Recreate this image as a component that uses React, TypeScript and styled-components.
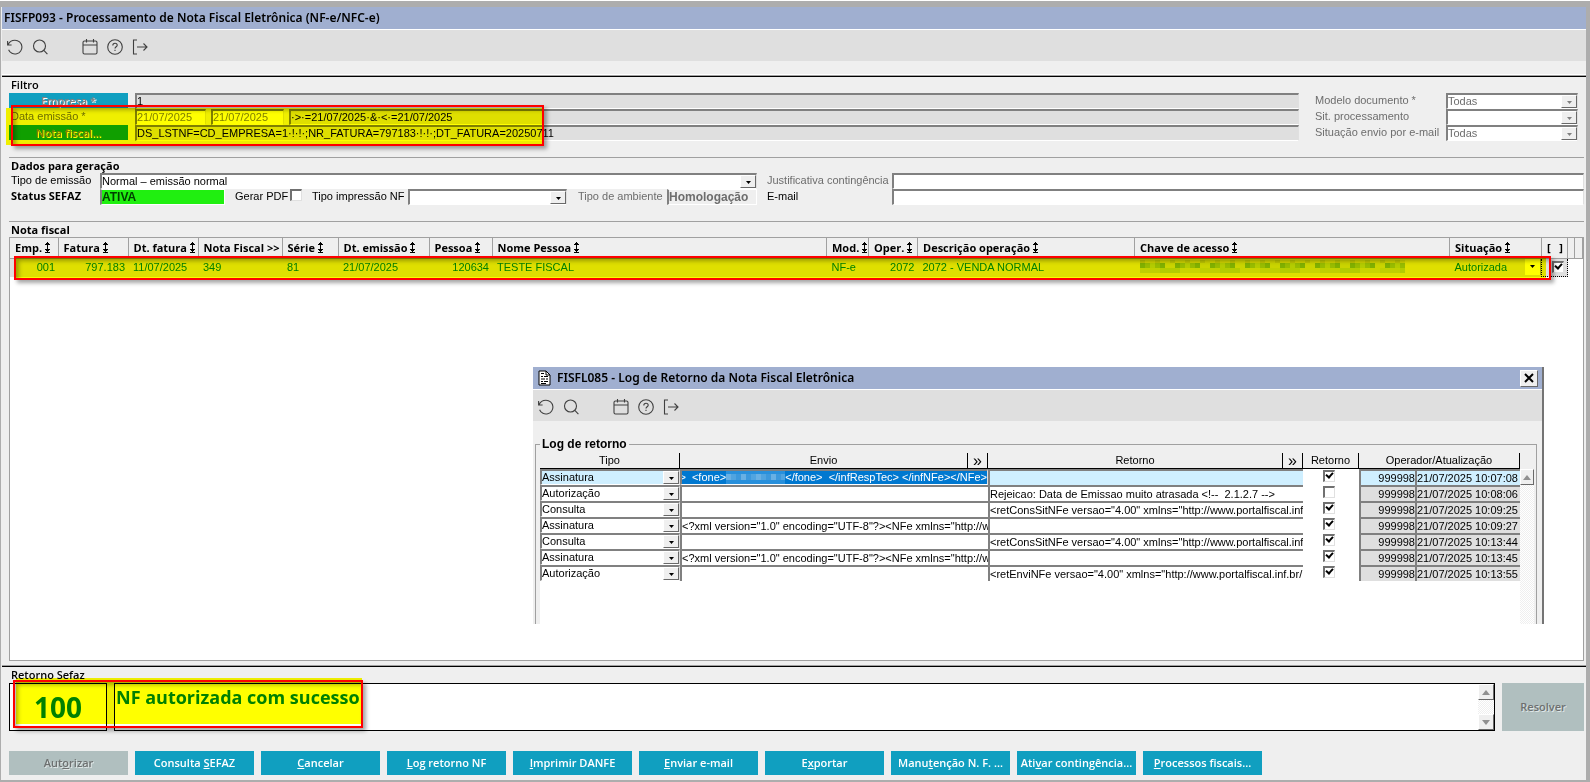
import React from "react";
import styled, { createGlobalStyle, css } from "styled-components";

const UI = `"Liberation Sans", Arial, sans-serif`;
const HEAD = `"Open Sans", "Noto Sans", sans-serif`;
const TITLE = `"Noto Sans", "DejaVu Sans", sans-serif`;

const Global = createGlobalStyle`
  *, *::before, *::after { box-sizing: border-box; }
  body { margin: 0; background: #fff; font: 11px/16px ${UI}; color: #000; }
  button, input, select, textarea { font: inherit; color: inherit; border-radius: 0; margin: 0; padding: 0; outline: 0; }
  svg { display: block; }
`;

const Frame = styled.div`
  display: flex;
  flex-direction: column;
  min-height: calc(100vh - 1px);
  margin-top: 1px;
  border: solid #adadad;
  border-width: 6px 4px 2px 1px;
  padding-left: 1px;
  background: #efefef;
`;

const TitleBar = styled.header`
  display: flex;
  align-items: center;
  gap: 6px;
  height: 23px;
  padding: 0 4px 0 2px;
  background: #a0afd0;
  border-bottom: 1px solid #fff;
  font: 600 12px/22px ${TITLE};
`;

const LogTitleBar = styled(TitleBar)`
  padding-left: 5px;
`;

const Title = styled.h1`
  flex: 1;
  margin: 0;
  font: inherit;
`;

const Toolbar = styled.nav`
  display: flex;
  align-items: center;
  gap: 9px;
  height: 31px;
  padding: 2px 5px 0;
  background: #dfdfdf;
`;

const ToolButton = styled.button<{ $apart?: boolean }>`
  border: 0;
  background: none;
  width: 16px;
  height: 16px;
  margin-left: ${(p) => (p.$apart ? 25 : 0)}px;
  color: #404040;
`;

const Rule = styled.hr`
  width: 100%;
  height: 2px;
  margin: 0;
  border: 0;
  border-top: 1px solid #a0a0a0;
  background: #000;
  flex: none;
`;

const Section = styled.section<{ $lined?: boolean; $grow?: boolean }>`
  position: relative;
  display: flex;
  flex-direction: column;
  margin: 0 2px 0 7px;
  padding-bottom: ${(p) => (p.$grow ? 4 : 16)}px;
  ${(p) => p.$lined && "border-top: 1px solid #a0a0a0;"}
  ${(p) => p.$grow && "flex: 1;"}
`;

const Heading = styled.h2<{ $small?: boolean }>`
  margin: 0;
  padding-left: 2px;
  font: ${(p) => (p.$small ? 600 : 700)} 11px/15px ${HEAD};
`;

/* Form parts */
const sunken = css`
  border: 1px solid #fff;
  border-top: 2px solid #808080;
  border-left: 2px solid #808080;
  border-right-color: #e0e0e0;
`;

const Field = styled.input<{ $grey?: boolean; $dim?: boolean }>`
  ${sunken}
  width: 100%;
  min-width: 0;
  height: 16px;
  line-height: 12px;
  padding: 0 0 1px;
  background: ${(p) => (p.$grey ? "#dfdfdf" : "#fff")};
  color: ${(p) => (p.$dim ? "#808080" : "#000")};
`;

const Label = styled.label<{ $dim?: boolean; $strong?: boolean }>`
  white-space: nowrap;
  line-height: 14px;
  color: ${(p) => (p.$dim ? "#6d6d6d" : "#000")};
  ${(p) => p.$strong && `font: 700 11px/14px ${HEAD};`}
`;

const ComboBox = styled.span`
  ${sunken}
  display: flex;
  height: 16px;
  width: 100%;
  background: #fff;
`;

const ComboSelect = styled.select<{ $dim?: boolean }>`
  appearance: none;
  flex: 1;
  min-width: 0;
  height: 12px;
  border: 0;
  background: transparent;
  line-height: 12px;
  padding: 0;
  opacity: 1;
  color: ${(p) => (p.$dim ? "#6d6d6d" : "inherit")};
`;

const raised = css`
  border: 1px solid #fff;
  border-right-color: #696969;
  border-bottom-color: #696969;
  background: #efefef;
`;

const ComboArrow = styled.span`
  ${raised}
  flex: none;
  width: 16px;
  padding-top: 2px;
  display: grid;
  place-items: center;
  pointer-events: none;
`;

const Tick = styled.input`
  appearance: none;
  flex: none;
  display: block;
  width: 12px;
  height: 12px;
  border: 1px solid #e0e0e0;
  border-top: 2px solid #707070;
  border-left: 2px solid #707070;
  background: #fff;
  position: relative;
  &:checked::after {
    content: "";
    position: absolute;
    left: 1px;
    top: 0;
    width: 7px;
    height: 5px;
    border: solid #000;
    border-width: 0 0 2px 2px;
    transform: rotate(-48deg);
  }
`;

const ActionButton = styled.button`
  width: 119px;
  height: 24px;
  border: 0;
  background: #109fc0;
  color: #fff;
  font: 600 11px/24px ${HEAD};
  white-space: nowrap;
  &:disabled {
    background: #b0bfbf;
    color: #6d7070;
    text-shadow: 1px 1px 0 #dfe6e6;
  }
`;

const FilterButton = styled.button`
  height: 16px;
  border: 0;
  border-bottom: 1px solid #efefef;
  background: #109fc0;
  color: #808080;
  text-shadow: 1px 1px 0 #fff;
  font: 600 11px/15px ${HEAD};
`;

/* Highlighter marks laid over a region */
const Marker = styled.div`
  position: absolute;
  background: #ff0;
  mix-blend-mode: multiply;
  pointer-events: none;
`;

const MarkFrame = styled.div`
  position: absolute;
  border: 2px solid #f00;
  box-shadow: 3px 3px 4px rgba(0, 0, 0, 0.35), inset 3px 3px 4px rgba(0, 0, 0, 0.3);
  pointer-events: none;
`;

const FilterMarker = styled(Marker)`left: -3px; top: 31px; width: 537px; height: 37px;`;
const FilterFrame = styled(MarkFrame)`left: 2px; top: 28px; width: 533px; height: 41px;`;
const RowMarker = styled(Marker)`left: 6px; right: 37px; top: 20px; height: 20px;`;
const RowFrame = styled(MarkFrame)`left: 4px; right: 32px; top: 18px; height: 24px;`;
const ReturnMarker = styled(Marker)`left: 7px; top: -5px; width: 346px; height: 46px;`;
const ReturnFrame = styled(MarkFrame)`left: 4px; top: -3px; width: 350px; height: 48px;`;

/* Filter */
const FilterGrid = styled.div`
  display: grid;
  grid-template-columns: 119px minmax(0, 1fr) 131px 132px;
  padding-right: 6px;
  margin-top: 1px;
  & > label:nth-child(4n + 1) { padding-left: 2px; }
  & > :nth-child(4n + 2) { margin-left: 7px; margin-right: 16px; width: auto; }
`;

const DateRow = styled.div`
  display: grid;
  grid-template-columns: 71px 73px minmax(0, 1fr);
  column-gap: 5px;
`;

/* Generation data */
const DataGrid = styled.div`
  display: grid;
  grid-template-columns: 91px 657px 119px minmax(0, 1fr);
  & > :nth-child(4n + 1) { padding-left: 2px; }
  & > :nth-child(4n + 3) { margin-left: 10px; }
  & > :nth-child(4n + 4) { margin-left: 16px; width: auto; }
`;

const StatusValue = styled.input<{ $live?: boolean }>`
  height: 16px;
  width: 100%;
  border: 1px solid #fff;
  border-left: 2px solid #808080;
  background: ${(p) => (p.$live ? "#20ef10" : "#efefef")};
  color: ${(p) => (p.$live ? "#004000" : "#6d6d6d")};
  font: 700 12px/14px ${UI};
`;

const PdfOption = styled.span`
  display: flex;
  gap: 2px;
  padding-left: 10px;
`;

const GenerationRow = styled.div`
  display: grid;
  grid-template-columns: 125px 76px 107px 159px 100px 90px;
  & > label { padding-left: 11px; }
`;

/* Invoice list */
const ListBox = styled.div`
  position: relative;
  flex: 1;
  min-height: 424px;
  border: 1px solid #a0a0a0;
  background: #fff;
`;

const ListTable = styled.table`
  width: 100%;
  table-layout: fixed;
  border-collapse: collapse;
`;

const ListHead = styled.th`
  height: 20px;
  padding: 0 0 0 5px;
  background: #efefef;
  border-right: 1px solid #a0a0a0;
  border-bottom: 1px solid #a0a0a0;
  font: 700 11px/18px ${HEAD};
  text-align: left;
  white-space: pre;
  overflow: hidden;
`;

const HeadText = styled.span`
  display: flex;
  align-items: center;
  gap: 2px;
`;

const ListCell = styled.td<{ $right?: boolean }>`
  height: 18px;
  padding: 0 3px 2px 5px;
  background: #dfdfdf;
  color: #008000;
  text-align: ${(p) => (p.$right ? "right" : "left")};
  white-space: nowrap;
`;

const StateCell = styled.div`
  display: flex;
  align-items: center;
  justify-content: space-between;
  margin-right: -3px;
`;

const StateButton = styled.button`
  border: 0;
  border-right: 1px solid #a0a0a0;
  width: 16px;
  height: 16px;
  background: #fff;
  display: grid;
  place-items: center;
`;

const CheckCell = styled.td`
  padding: 0 0 0 10px;
  background: #dfdfdf;
  border: 1px dotted #000;
`;

/* Log window */
const LogWindow = styled.section`
  position: absolute;
  left: 523px;
  right: 39px;
  top: 129px;
  height: 257px;
  overflow: hidden;
  background: #efefef;
  border-right: 2px solid #747474;
  z-index: 2;
`;

const CloseButton = styled.button`
  ${raised}
  width: 18px;
  height: 17px;
  display: grid;
  place-items: center;
`;

const LogGroup = styled.fieldset`
  min-width: 0;
  margin: 15px 5px 0 2px;
  padding: 1px 2px 0 4px;
  height: 220px;
  border: 1px solid #a0a0a0;
  display: block;
`;

const LogLegend = styled.legend`
  padding: 0 2px;
  font: 700 12px/16px ${UI};
`;

const LogBody = styled.div`
  display: flex;
  background: linear-gradient(#efefef 16px, #fff 16px);
  height: 200px;
`;

const LogTableArea = styled.div`
  flex: 1;
  min-width: 0;
`;

const LogTable = styled.table`
  width: 100%;
  table-layout: fixed;
  border-collapse: separate;
  border-spacing: 0;
`;

const LogHead = styled.th`
  height: 16px;
  padding: 0;
  background: #efefef;
  border-right: 1px solid #000;
  border-bottom: 1px solid #000;
  font: 400 11px/15px ${UI};
  text-align: center;
`;

const HeadSplit = styled.span`
  display: flex;
  & > :first-child { flex: 1; }
`;

const MoreButton = styled.button`
  width: 20px;
  height: 15px;
  border: 0;
  border-left: 1px solid #000;
  background: none;
  font: 16px/13px ${UI};
`;

const LogCell = styled.td<{ $active?: boolean; $grey?: boolean }>`
  height: 16px;
  padding: 0;
  overflow: hidden;
  & > * { background: ${(p) => (p.$active ? "#cfefff" : p.$grey ? "#dfdfdf" : "#fff")}; }
`;

const LogField = styled(Field)<{ $right?: boolean }>`
  display: block;
  text-align: ${(p) => (p.$right ? "right" : "left")};
  border-bottom-width: 0;
  border-right-width: 0;
`;

const Selected = styled.div`
  ${sunken}
  display: flex;
  justify-content: flex-end;
  height: 16px;
  line-height: 13px;
  white-space: pre;
  overflow: hidden;
  color: #fff;
  && { background: #0078d0; }
`;

const Masked = styled.svg`
  flex: none;
`;

const TickWrap = styled.div`
  display: grid;
  justify-items: center;
  height: 16px;
  padding: 1px 4px 0 0;
  && { background: #fff; }
`;

const checker = css`
  background: repeating-conic-gradient(#efefef 0 25%, #fff 0 50%) 0 0 / 2px 2px;
`;

const LogScroll = styled.div`
  ${checker}
  width: 14px;
  margin-top: 16px;
`;

const ScrollButton = styled.button`
  ${raised}
  width: 100%;
  height: 16px;
  display: grid;
  place-items: center;
`;

/* Return message */
const ReturnRow = styled.div`
  position: relative;
  display: grid;
  grid-template-columns: 98px minmax(0, 1fr) 82px;
  grid-template-rows: 48px;
  column-gap: 7px;
  margin: 1px 0 20px;
`;

const CodeBox = styled.input`
  width: 100%;
  height: 48px;
  border: 1px solid #000;
  background: #fff;
  color: #008000;
  font: 700 28px/44px ${HEAD};
  text-align: center;
`;

const MessageBox = styled.div`
  display: flex;
  min-height: 0;
  border: 1px solid #000;
  background: #fff;
`;

const Message = styled.textarea`
  flex: 1;
  height: 46px;
  border: 0;
  resize: none;
  overflow: hidden;
  padding: 0 1px;
  color: #008000;
  background: #fff;
  font: 700 18px/27px ${HEAD};
`;

const MessageScroll = styled.div`
  ${checker}
  width: 16px;
  display: flex;
  flex-direction: column;
  justify-content: space-between;
`;

const ResolveButton = styled(ActionButton)`
  width: 100%;
  height: 48px;
`;

const Actions = styled.div`
  display: flex;
  flex-wrap: wrap;
  gap: 7px;
`;

const Footer = styled(Section)`
  padding-bottom: 5px;
`;

const Spacer = styled.div`
  height: 14px;
  flex: none;
  border-bottom: 1px solid #fff;
`;

/* Drawings */
const Icon = ({ children }: { children: React.ReactNode }) => (
  <svg width="16" height="16" viewBox="0 0 16 16" fill="none" stroke="currentColor" strokeWidth="1.1">
    {children}
  </svg>
);

const Down = ({ dim }: { dim?: boolean }) => (
  <svg width="5" height="3" viewBox="0 0 5 3"><path d="M0 0h5L2.5 3z" fill={dim ? "#808080" : "#000"} /></svg>
);

const Triangle = ({ down }: { down?: boolean }) => (
  <svg width="8" height="5" viewBox="0 0 8 5"><path d={down ? "M0 0h8L4 5z" : "M0 5h8L4 0z"} fill="#909090" /></svg>
);

const Sort = () => (
  <svg width="7" height="11" viewBox="0 0 7 11" fill="#000" shapeRendering="crispEdges">
    <path d="M3 0h1v10H3zM2 1h3v1H2zM1 2h5v1H1zM1 7h5v1H1zM2 8h3v1H2zM1 10h5v1H1z" />
  </svg>
);

const PageIcon = () => (
  <svg width="13" height="16" viewBox="0 0 13 16">
    <path d="M1 1h7l4 4v10H1z" fill="#fff" stroke="#000" />
    <path d="M8 1v4h4M3 3.5h3M3 6.500h2M6 6.500h4M3 9h4M8 9h2M3 11.500h2M6 11.500h4M3 13.500h5" fill="none" stroke="#000" />
  </svg>
);

const tones = ["#80b080", "#c0d0c0", "#a0c0a0", "#b4ccb4", "#98bc98", "#cad4ca", "#a8c4a8"];
const Mosaic = () => (
  <svg width="265" height="14" viewBox="0 0 265 14">
    {Array.from({ length: 53 }, (_, i) => (
      <g key={i}>
        <rect x={i * 5} y="0" width="5" height="3" fill={i % 3 ? "#cdd2cd" : "#bcc4bc"} />
        <rect x={i * 5} y="3" width="5" height="5" fill={tones[(i * i + i * 3) % 7]} />
        <rect x={i * 5} y="8" width="5" height="5" fill={tones[((i * 5 + (i % 4)) % 6) + 1]} />
      </g>
    ))}
  </svg>
);

const PhoneMask = () => (
  <Masked width="59" height="14" viewBox="0 0 59 14">
    <rect width="59" height="14" fill="#2890dc" />
    {Array.from({ length: 12 }, (_, i) => (
      <rect key={i} x={i * 5} y="3" width="5" height="6" fill={i % 3 === 0 ? "#68b0e4" : i % 2 ? "#50a4e0" : "#3c98dc"} />
    ))}
  </Masked>
);

const Tools = () => (
  <Toolbar>
    <ToolButton aria-label="Atualizar">
      <Icon><path d="M.6 2v4h4M1 5.800C2.200 2.800 5 1.200 8 1.200a6.900 6.900 0 1 1-6.400 9.500" /></Icon>
    </ToolButton>
    <ToolButton aria-label="Pesquisar">
      <Icon><circle cx="7.500" cy="7" r="6" /><path d="M11.800 11.400l3.600 3.800" /></Icon>
    </ToolButton>
    <ToolButton $apart aria-label="Calendário">
      <Icon><rect x="1" y="2" width="14" height="13" rx="1.500" /><path d="M1 6h14M4.500 0v3.500M11.500 0v3.500" /></Icon>
    </ToolButton>
    <ToolButton aria-label="Ajuda">
      <Icon>
        <circle cx="8" cy="8" r="7.300" />
        <path d="M5.800 6.400c0-1.300 1-2.200 2.200-2.200s2.200.9 2.200 2c0 1.500-2.200 1.700-2.200 3.400M8 10.700v1.300" />
      </Icon>
    </ToolButton>
    <ToolButton aria-label="Sair">
      <Icon><path d="M5 1H1.500v14H5M5 8h10M11.500 4.500L15 8l-3.500 3.500" /></Icon>
    </ToolButton>
  </Toolbar>
);

const Combo = ({ id, value, dim, label }: { id?: string; value: string; dim?: boolean; label?: string }) => (
  <ComboBox>
    <ComboSelect id={id} aria-label={label} $dim={dim} disabled={dim} defaultValue={value}>
      <option>{value}</option>
    </ComboSelect>
    <ComboArrow><Down dim={dim} /></ComboArrow>
  </ComboBox>
);

const columns: { text: string; width?: number; sort?: boolean }[] = [
  { text: "Emp.", width: 48, sort: true },
  { text: "Fatura", width: 70, sort: true },
  { text: "Dt. fatura", width: 70, sort: true },
  { text: "Nota Fiscal >>", width: 84 },
  { text: "Série", width: 56, sort: true },
  { text: "Dt. emissão", width: 91, sort: true },
  { text: "Pessoa", width: 63, sort: true },
  { text: "Nome Pessoa", sort: true },
  { text: "Mod.", width: 42, sort: true },
  { text: "Oper.", width: 49, sort: true },
  { text: "Descrição operação", width: 217, sort: true },
  { text: "Chave de acesso", width: 315, sort: true },
  { text: "Situação", width: 92, sort: true },
  { text: "[   ]", width: 26 },
  { text: "", width: 7 },
  { text: "", width: 8 },
];

const xml = `<?xml version="1.0" encoding="UTF-8"?><NFe xmlns="http://www.portalfiscal.inf.br/nfe">`;
const cons = `<retConsSitNFe versao="4.00" xmlns="http://www.portalfiscal.inf.br/nfe">`;
const logs = [
  { tipo: "Assinatura", envio: "", retorno: "", ok: true, at: "10:07:08" },
  { tipo: "Autorização", envio: "", retorno: "Rejeicao: Data de Emissao muito atrasada <!--  2.1.2.7 -->", ok: false, at: "10:08:06" },
  { tipo: "Consulta", envio: "", retorno: cons, ok: true, at: "10:09:25" },
  { tipo: "Assinatura", envio: xml, retorno: "", ok: true, at: "10:09:27" },
  { tipo: "Consulta", envio: "", retorno: cons, ok: true, at: "10:13:44" },
  { tipo: "Assinatura", envio: xml, retorno: "", ok: true, at: "10:13:45" },
  { tipo: "Autorização", envio: "", retorno: `<retEnviNFe versao="4.00" xmlns="http://www.portalfiscal.inf.br/nfe">`, ok: true, at: "10:13:55" },
];

const actions: [string, string, string][] = [
  ["Aut", "o", "rizar"],
  ["Consulta ", "S", "EFAZ"],
  ["", "C", "ancelar"],
  ["", "L", "og retorno NF"],
  ["", "I", "mprimir DANFE"],
  ["", "E", "nviar e-mail"],
  ["E", "x", "portar"],
  ["Manu", "t", "enção N. F. ..."],
  ["Ati", "v", "ar contingência..."],
  ["", "P", "rocessos fiscais..."],
];

const LogDialog = () => (
  <LogWindow aria-label="Log de Retorno">
    <LogTitleBar as="div">
      <PageIcon />
      <Title as="h2">FISFL085 - Log de Retorno da Nota Fiscal Eletrônica</Title>
      <CloseButton aria-label="Fechar">
        <svg width="10" height="10" viewBox="0 0 10 10" stroke="#000" strokeWidth="2"><path d="M1 1l8 8M9 1L1 9" /></svg>
      </CloseButton>
    </LogTitleBar>
    <Tools />
    <LogGroup>
      <LogLegend>Log de retorno</LogLegend>
      <LogBody>
        <LogTableArea>
          <LogTable>
            <colgroup>
              <col width={140} /><col width={308} /><col />
              <col width={56} /><col width={56} /><col width={105} />
            </colgroup>
            <thead>
              <tr>
                <LogHead>Tipo</LogHead>
                <LogHead><HeadSplit><span>Envio</span><MoreButton>»</MoreButton></HeadSplit></LogHead>
                <LogHead><HeadSplit><span>Retorno</span><MoreButton>»</MoreButton></HeadSplit></LogHead>
                <LogHead>Retorno</LogHead>
                <LogHead colSpan={2}>Operador/Atualização</LogHead>
              </tr>
            </thead>
            <tbody>
              {logs.map((l, i) => (
                <tr key={l.at}>
                  <LogCell $active={!i}><Combo value={l.tipo} label="Tipo" /></LogCell>
                  <LogCell>
                    {i ? (
                      <LogField readOnly aria-label="Envio" value={l.envio} />
                    ) : (
                      <Selected>
                        <span>{">  <fone>"}</span><PhoneMask /><span>{"</fone>  </infRespTec> </infNFe></NFe>"}</span>
                      </Selected>
                    )}
                  </LogCell>
                  <LogCell $active={!i}><LogField readOnly aria-label="Retorno" value={l.retorno} /></LogCell>
                  <LogCell><TickWrap><Tick type="checkbox" aria-label="Retorno" defaultChecked={l.ok} /></TickWrap></LogCell>
                  <LogCell $active={!i} $grey><LogField $right readOnly aria-label="Operador" value="999998" /></LogCell>
                  <LogCell $active={!i} $grey><LogField readOnly aria-label="Atualização" value={`21/07/2025 ${l.at}`} /></LogCell>
                </tr>
              ))}
            </tbody>
          </LogTable>
        </LogTableArea>
        <LogScroll><ScrollButton aria-label="Subir"><Triangle /></ScrollButton></LogScroll>
      </LogBody>
    </LogGroup>
  </LogWindow>
);

export default function App() {
  return (
    <>
      <Global />
      <Frame>
        <TitleBar><Title>FISFP093 - Processamento de Nota Fiscal Eletrônica (NF-e/NFC-e)</Title></TitleBar>
        <Tools />
        <Spacer />
        <Rule />
        <Section>
          <Heading $small>Filtro</Heading>
          <FilterGrid>
            <FilterButton>Empresa *</FilterButton>
            <Field $grey aria-label="Empresa" defaultValue="1" />
            <Label $dim htmlFor="modelo">Modelo documento *</Label>
            <Combo id="modelo" dim value="Todas" />
            <Label $dim htmlFor="data">Data emissão *</Label>
            <DateRow>
              <Field id="data" $dim defaultValue="21/07/2025" />
              <Field $dim aria-label="Data final" defaultValue="21/07/2025" />
              <Field $grey aria-label="Intervalo" defaultValue="·>·=21/07/2025·&·<·=21/07/2025" />
            </DateRow>
            <Label $dim htmlFor="sit">Sit. processamento</Label>
            <Combo id="sit" dim value="" />
            <FilterButton>Nota fiscal...</FilterButton>
            <Field $grey aria-label="Nota fiscal" defaultValue="DS_LSTNF=CD_EMPRESA=1·!·!·;NR_FATURA=797183·!·!·;DT_FATURA=20250711" />
            <Label $dim htmlFor="envio">Situação envio por e-mail</Label>
            <Combo id="envio" dim value="Todas" />
          </FilterGrid>
          <FilterMarker />
          <FilterFrame />
        </Section>

        <Section $lined>
          <Heading>Dados para geração</Heading>
          <DataGrid>
            <Label htmlFor="tipo">Tipo de emissão</Label>
            <Combo id="tipo" value="Normal – emissão normal" />
            <Label $dim htmlFor="just">Justificativa contingência</Label>
            <Field id="just" />
            <Label $strong htmlFor="status">Status SEFAZ</Label>
            <GenerationRow>
              <StatusValue id="status" $live readOnly value="ATIVA" />
              <PdfOption>
                <Label htmlFor="pdf">Gerar PDF</Label>
                <Tick id="pdf" type="checkbox" />
              </PdfOption>
              <Label htmlFor="impressao">Tipo impressão NF</Label>
              <Combo id="impressao" value="" />
              <Label $dim htmlFor="ambiente">Tipo de ambiente</Label>
              <StatusValue id="ambiente" readOnly value="Homologação" />
            </GenerationRow>
            <Label htmlFor="mail">E-mail</Label>
            <Field id="mail" />
          </DataGrid>
        </Section>

        <Section $lined $grow>
          <Heading>Nota fiscal</Heading>
          <ListBox>
            <ListTable>
              <colgroup>{columns.map((c, i) => <col key={i} width={c.width} />)}</colgroup>
              <thead>
                <tr>
                  {columns.map((c, i) => (
                    <ListHead key={i}><HeadText>{c.text}{c.sort && <Sort />}</HeadText></ListHead>
                  ))}
                </tr>
              </thead>
              <tbody>
                <tr>
                  <ListCell $right>001</ListCell>
                  <ListCell $right>797.183</ListCell>
                  <ListCell>11/07/2025</ListCell>
                  <ListCell>349</ListCell>
                  <ListCell>81</ListCell>
                  <ListCell>21/07/2025</ListCell>
                  <ListCell $right>120634</ListCell>
                  <ListCell>TESTE FISCAL</ListCell>
                  <ListCell>NF-e</ListCell>
                  <ListCell $right>2072</ListCell>
                  <ListCell>2072 - VENDA NORMAL</ListCell>
                  <ListCell><Mosaic /></ListCell>
                  <ListCell>
                    <StateCell>Autorizada<StateButton aria-label="Situação"><Down /></StateButton></StateCell>
                  </ListCell>
                  <CheckCell><Tick type="checkbox" aria-label="Selecionar nota" defaultChecked /></CheckCell>
                </tr>
              </tbody>
            </ListTable>
            <RowMarker />
            <RowFrame />
            <LogDialog />
          </ListBox>
        </Section>

        <Rule />
        <Footer>
          <Heading $small>Retorno Sefaz</Heading>
          <ReturnRow>
            <CodeBox readOnly aria-label="Código" value="100" />
            <MessageBox>
              <Message readOnly aria-label="Mensagem" value="NF autorizada com sucesso" />
              <MessageScroll>
                <ScrollButton aria-label="Subir"><Triangle /></ScrollButton>
                <ScrollButton aria-label="Descer"><Triangle down /></ScrollButton>
              </MessageScroll>
            </MessageBox>
            <ResolveButton disabled>Resolver</ResolveButton>
            <ReturnMarker />
            <ReturnFrame />
          </ReturnRow>
          <Actions>
            {actions.map(([a, key, b], i) => (
              <ActionButton key={i} disabled={!i}>{a}<u>{key}</u>{b}</ActionButton>
            ))}
          </Actions>
        </Footer>
      </Frame>
    </>
  );
}
